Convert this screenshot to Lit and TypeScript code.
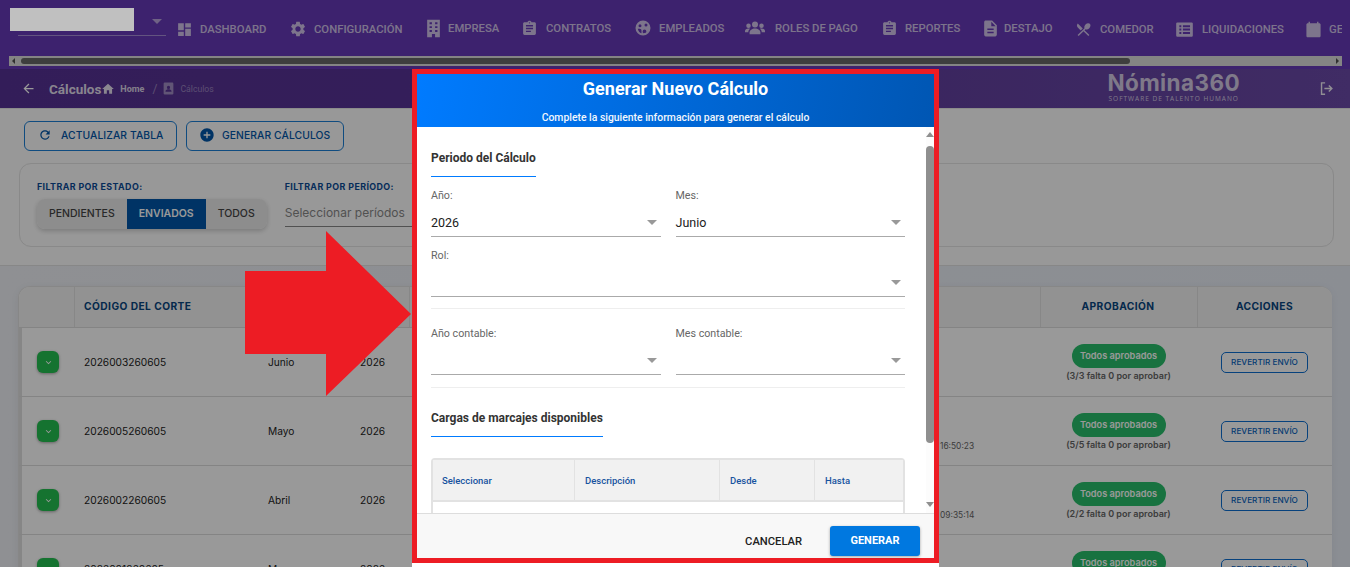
import { LitElement, html, css, svg } from "lit";
import { customElement } from "lit/decorators.js";

const P: Record<string, any> = {
  dashboard: svg`<path d="M3 13h8V3H3v10zm0 8h8v-6H3v6zm10 0h8V11h-8v10zm0-18v6h8V3h-8z"/>`,
  gear: svg`<path d="M19.14 12.94c.04-.3.06-.61.06-.94 0-.32-.02-.64-.07-.94l2.03-1.58c.18-.14.23-.41.12-.61l-1.92-3.32c-.12-.22-.37-.29-.59-.22l-2.39.96c-.5-.38-1.03-.7-1.62-.94l-.36-2.54c-.04-.24-.24-.41-.48-.41h-3.84c-.24 0-.43.17-.47.41l-.36 2.54c-.59.24-1.13.57-1.62.94l-2.39-.96c-.22-.08-.47 0-.59.22L2.74 8.87c-.12.21-.08.47.12.61l2.03 1.58c-.05.3-.09.63-.09.94s.02.64.07.94l-2.03 1.58c-.18.14-.23.41-.12.61l1.92 3.32c.12.22.37.29.59.22l2.39-.96c.5.38 1.03.7 1.62.94l.36 2.54c.05.24.24.41.48.41h3.84c.24 0 .44-.17.47-.41l.36-2.54c.59-.24 1.13-.56 1.62-.94l2.39.96c.22.08.47 0 .59-.22l1.92-3.32c.12-.22.07-.47-.12-.61l-2.01-1.58zM12 15.6c-1.98 0-3.6-1.62-3.6-3.6s1.62-3.6 3.6-3.6 3.6 1.62 3.6 3.6-1.62 3.6-3.6 3.6z"/>`,
  building: svg`<path fill-rule="evenodd" d="M4 1h16v22h-6v-4h-4v4H4zM7 4v2.500h3V4zm7 0v2.500h3V4zM7 9v2.500h3V9zm7 0v2.500h3V9zM7 14v2.500h3V14zm7 0v2.500h3V14z"/>`,
  clipboard: svg`<path d="M19 3h-4.18C14.4 1.84 13.3 1 12 1c-1.3 0-2.4.84-2.82 2H5c-1.1 0-2 .9-2 2v14c0 1.1.9 2 2 2h14c1.1 0 2-.9 2-2V5c0-1.1-.9-2-2-2zm-7 0c.55 0 1 .45 1 1s-.45 1-1 1-1-.45-1-1 .45-1 1-1zm2 14H7v-2h7v2zm3-4H7v-2h10v2zm0-4H7V7h10v2z"/>`,
  face: svg`<path fill-rule="evenodd" d="M12 2a10 10 0 100 20 10 10 0 000-20zM8 7a2 2 0 110 4 2 2 0 010-4zm8-1a2 2 0 110 4 2 2 0 010-4zM5 13h2.500c1.500 0 2.500 1 2.500 2.500V19c-2.500-.7-4.400-3-5-6zm9 1a2.500 2.500 0 012.500 2.500c0 .8-.3 1.400-.8 1.900l-3.200.6c-.8-.5-1-1.400-1-2.500A2.500 2.500 0 0114 14z"/>`,
  groups: svg`<g transform="translate(0 4)"><circle cx="12" cy="3.800" r="3.600"/><circle cx="4.200" cy="5.300" r="2.700"/><circle cx="19.800" cy="5.300" r="2.700"/><path d="M5.500 15.500v-2c0-3 3-5 6.500-5s6.500 2 6.500 5v2z"/><path d="M0 13v-1.500c0-1.800 1.800-3 4-3 .8 0 1.500.1 2.100.5-1.300 1-2.100 2.400-2.100 4z"/><path d="M24 13v-1.500c0-1.800-1.800-3-4-3-.8 0-1.500.1-2.100.5 1.300 1 2.100 2.400 2.100 4z"/></g>`,
  doc: svg`<path d="M14 2H6c-1.100 0-1.990.9-1.990 2L4 20c0 1.100.89 2 1.990 2H18c1.100 0 2-.9 2-2V8l-6-6zm2 16H8v-2h8v2zm0-4H8v-2h8v2zm-3-5V3.500L18.500 9H13z"/>`,
  food: svg`<path d="M8.100 13.340l2.830-2.830L3.910 3.500c-1.560 1.560-1.560 4.090 0 5.660l4.190 4.180zm6.780-1.810c1.530.71 3.680.21 5.270-1.380 1.910-1.910 2.280-4.650.81-6.120-1.460-1.460-4.200-1.100-6.120.81-1.590 1.590-2.090 3.740-1.380 5.270L3.700 19.870l1.410 1.410L12 14.410l6.880 6.880 1.410-1.410L13.410 13l1.470-1.470z"/>`,
  list: svg`<path fill-rule="evenodd" d="M3 3h18a1.500 1.500 0 011.500 1.500v15A1.500 1.500 0 0121 21H3a1.500 1.500 0 01-1.500-1.500v-15A1.500 1.500 0 013 3zm2.500 3.500v2.500H8V6.500zm4.500 0v2.500h9V6.500zm-4.500 4.300v2.500H8v-2.500zm4.500 0v2.500h9v-2.500zm-4.500 4.300v2.500H8v-2.500zm4.500 0v2.500h9v-2.500z"/>`,
  calendar: svg`<path d="M20 3h-1V1h-2v2H7V1H5v2H4c-1.100 0-2 .9-2 2v16c0 1.100.9 2 2 2h16c1.100 0 2-.9 2-2V5c0-1.100-.9-2-2-2z"/>`,
  refresh: svg`<path d="M17.650 6.350C16.200 4.900 14.210 4 12 4c-4.420 0-7.990 3.580-7.990 8s3.570 8 7.990 8c3.730 0 6.840-2.550 7.730-6h-2.080c-.82 2.330-3.040 4-5.650 4-3.310 0-6-2.690-6-6s2.690-6 6-6c1.660 0 3.140.69 4.220 1.780L13 11h7V4l-2.350 2.350z"/>`,
  add: svg`<path d="M12 2C6.480 2 2 6.480 2 12s4.480 10 10 10 10-4.480 10-10S17.520 2 12 2zm5 11h-4v4h-2v-4H7v-2h4V7h2v4h4v2z"/>`,
  home: svg`<path d="M10 20v-6h4v6h5v-8h3L12 3 2 12h3v8z"/>`,
  back: svg`<path d="M20 11H7.830l5.590-5.590L12 4l-8 8 8 8 1.410-1.410L7.830 13H20v-2z"/>`,
  badge: svg`<path fill-rule="evenodd" d="M5 1h14a2 2 0 012 2v18a2 2 0 01-2 2H5a2 2 0 01-2-2V3a2 2 0 012-2zm7 6a3 3 0 100 6 3 3 0 000-6zm-5.500 11h11v-1.500c0-2-3.700-3-5.500-3s-5.500 1-5.500 3z"/>`,
  logout: svg`<path d="M10 3H4v18h6v-2H6V5h4zm6 4l-1.400 1.400L17.200 11H9v2h8.200l-2.600 2.600L16 17l5-5z"/>`,
  chevron: svg`<path d="M7.410 8.590L12 13.170l4.590-4.580L18 10l-6 6-6-6z"/>`,
};

const icon = (name: string, size: number) =>
  html`<svg class="ic" viewBox="0 0 24 24" width=${size} height=${size} fill="currentColor">${P[name]}</svg>`;

const NAV = [
  { t: "DASHBOARD", i: "dashboard", s: 17, low: 1, w: 113, slot: 22 },
  { t: "CONFIGURACIÓN", i: "gear", s: 18, low: 1, w: 135, slot: 23 },
  { t: "EMPRESA", i: "building", s: 19, low: 0, w: 97, slot: 22 },
  { t: "CONTRATOS", i: "clipboard", s: 17, low: 0, w: 113, slot: 23 },
  { t: "EMPLEADOS", i: "face", s: 18, low: 0, w: 111, slot: 23 },
  { t: "ROLES DE PAGO", i: "groups", s: 20, low: 0, w: 136, slot: 28 },
  { t: "REPORTES", i: "clipboard", s: 17, low: 0, w: 100, slot: 22 },
  { t: "DESTAJO", i: "doc", s: 19, low: 0, w: 94, slot: 21 },
  { t: "COMEDOR", i: "food", s: 17, low: 1, w: 100, slot: 23 },
  { t: "LIQUIDACIONES", i: "list", s: 19, low: 1, w: 130, slot: 25 },
  { t: "GE", i: "calendar", s: 17, low: 1, w: 35, slot: 22 },
];

const ROWS = [
  { c: "2026003260605", m: "Junio", a: "2026", d: "", s: "(3/3 falta 0 por aprobar)" },
  { c: "2026005260605", m: "Mayo", a: "2026", d: "16:50:23", s: "(5/5 falta 0 por aprobar)" },
  { c: "2026002260605", m: "Abril", a: "2026", d: "09:35:14", s: "(2/2 falta 0 por aprobar)" },
  { c: "2026001260605", m: "Marzo", a: "2026", d: "", s: "(1/1 falta 0 por aprobar)" },
];

@customElement("app-root")
export class AppRoot extends LitElement {
  static styles = css`
    :host { display: block; position: relative; width: 1350px; height: 567px; overflow: hidden; background: #fff; font-family: Inter, "Liberation Sans", sans-serif; }
    * { box-sizing: border-box; }
    .ic { flex: none; display: block; }
    .nav { height: 69px; background: #673ab7; display: flex; flex-direction: column; }
    .menu { height: 56px; width: 1342px; display: flex; align-items: center; font: 500 11.300px Roboto, sans-serif; color: rgba(255,255,255,.7); white-space: nowrap; overflow: hidden; }
    .sel { flex: none; width: 148px; height: 36px; margin: 0 12px 20px 18px; border-bottom: 1px solid rgba(255,255,255,.42); position: relative; }
    .sel i { position: absolute; right: 4px; top: 19px; border: 5px solid transparent; border-top-color: rgba(255,255,255,.54); border-bottom: 0; }
    .item { flex: none; display: flex; align-items: center; height: 20px; }
    .item.low { margin-top: 2px; }
    .slot { flex: none; margin-left: -2px; }
    .sbar { margin-left: 9px; width: 1333px; height: 10px; background: #dcdcdc; display: flex; align-items: center; padding: 0 12px; position: relative; }
    .thumb { height: 6px; width: 1109px; background: #686868; border-radius: 3px; }
    .arrow-l, .arrow-r { position: absolute; top: 2px; border: 3px solid transparent; }
    .arrow-l { left: 3px; border-right-color: #505050; border-left: 0; }
    .arrow-r { right: 3px; border-left-color: #505050; border-right: 0; }
    .crumb { height: 39px; background: linear-gradient(90deg, #563194 0%, #583396 30%, #6b4aa8 100%); display: flex; align-items: center; color: #fff; padding-left: 21px; font-family: Roboto, sans-serif; }
    .crumb .title { font: 700 13.500px Roboto, sans-serif; margin-left: 13px; color: rgba(255,255,255,.85); }
    .crumb .home { margin-left: 0; color: rgba(255,255,255,.85); }
    .crumb .h { font: 700 9px Roboto, sans-serif; margin-left: 5px; color: rgba(255,255,255,.8); }
    .crumb .sl { margin: 0 5px 0 8px; font-size: 12px; color: rgba(255,255,255,.4); }
    .crumb .badge { color: rgba(255,255,255,.45); }
    .crumb .c2 { font: 400 8.700px Roboto, sans-serif; margin-left: 5px; color: rgba(255,255,255,.4); }
    .logo { margin-left: auto; margin-right: 78px; display: flex; flex-direction: column; align-items: center; color: rgba(255,255,255,.72); transform: translateY(-2px); }
    .logo b { font: 700 22.500px/24px Inter, sans-serif; letter-spacing: .4px; }
    .logo span { font: 400 6.500px/8px "Open Sans", sans-serif; letter-spacing: 1px; }
    .crumb .out { margin-right: 15px; color: rgba(255,255,255,.9); }
    .top { height: 158px; background: #fdfdfd; border-top: 1px solid #e8e8e8; border-bottom: 1px solid #e2e2e2; padding: 12px 16px 0 19px; }
    .btns { display: flex; gap: 9px; padding-left: 5px; height: 42px; }
    .bt { height: 30px; padding-bottom: 2px; border: 1px solid #1c7fd6; border-radius: 6px; display: flex; align-items: center; color: #0056a8; font: 500 10.300px Inter, sans-serif; letter-spacing: .1px; white-space: nowrap; }
    .bt.a { width: 153px; padding-left: 13px; gap: 9px; }
    .bt.b { width: 158px; padding-left: 12px; gap: 7px; }
    .filter { height: 84px; background: #fefefe; border: 1px solid #e4e4e4; border-radius: 12px; display: flex; padding: 17px 0 0 17px; gap: 18px; }
    .lab { font: 700 8.900px/12px Inter, sans-serif; letter-spacing: .4px; color: #0a4a96; white-space: nowrap; }
    .seg { display: flex; height: 30px; margin-top: 6px; border-radius: 8px; overflow: hidden; box-shadow: 0 2px 5px rgba(0,0,0,.2); font: 500 10.500px/30px Inter, sans-serif; color: #444; }
    .seg span { background: #ebebeb; padding: 0 12px; }
    .seg .on { background: #0056a8; color: #fff; font-weight: 600; }
    .pick { width: 200px; height: 34px; border-bottom: 1px solid #888; font: 400 12px/16px Inter, sans-serif; color: #888; padding-top: 12px; }
    .main { height: 301px; background: linear-gradient(90deg, #eef0f5, #e8edf6); padding: 20px 18px 0 18px; }
    .table { background: #fff; border-radius: 12px 12px 0 0; height: 300px; overflow: hidden; border: 1px solid #e2e2e2; border-bottom: 0; border-right: 0; box-shadow: 0 2px 8px rgba(0,0,0,.06); }
    .grid { display: grid; grid-template-columns: 56px 183px 92px 60px 521px 110px 157px 135px; }
    .thead { height: 41px; background: #f4f4f4; border-bottom: 1px solid #ddd; font: 700 10.200px/39px Inter, sans-serif; letter-spacing: .45px; color: #08457f; }
    .thead > div { border-right: 1px solid #e2e2e2; padding-left: 10px; white-space: nowrap; }
    .thead > div:nth-child(2) { padding-left: 9px; }
    .thead > .ctr { text-align: center; padding: 0 2px 0 0; }
    .thead > .nb { border-right: 0; }
    .tr { height: 69px; border-bottom: 1px solid #dcdcdc; align-items: center; font: 400 10.200px Inter, sans-serif; color: #222; box-shadow: inset 3px 0 0 #e0e0e0; }
    .tr > div { padding-left: 10px; white-space: nowrap; }
    .tr > div:nth-child(2) { padding-left: 9px; }
    .tr > .x { padding-left: 18px; }
    .ex { width: 22px; height: 22px; border-radius: 6px; background: #24c050; box-shadow: 0 1px 3px rgba(0,0,0,.35); color: #fff; display: flex; align-items: center; justify-content: center; }
    .tr > .d { color: #666; font-size: 8.400px; align-self: end; padding: 0 0 14px 9px; }
    .tr > .ap { display: flex; flex-direction: column; align-items: center; gap: 2px; padding: 1px 2px 0 0; }
    .pill { width: 94px; height: 24px; border-radius: 12px; background: #28bf6b; color: #fff; font: 600 9.200px/24px Inter, sans-serif; text-align: center; }
    .sub { font: 600 9px/12px Inter, sans-serif; color: #666; }
    .tr > .ac { display: flex; padding: 0 0 0 23px; }
    .rv { width: 87px; height: 21px; border: 1px solid #0d6ed0; border-radius: 5px; color: #0864c0; font: 500 8.200px/19px Inter, sans-serif; text-align: center; }
    .scrim { position: absolute; inset: 0; background: rgba(0,0,0,.4); }
    .redact { position: absolute; left: 10px; top: 8px; width: 124px; height: 23px; background: #c0c0c0; }
    .arrow { position: absolute; left: 245px; top: 231px; }
    .sheet { position: absolute; left: 412px; top: 69px; width: 527px; height: 498px; background: #fff; font-family: Roboto, sans-serif; }
    .dlg { height: 494px; border: 5px solid #ed1c24; display: flex; flex-direction: column; background: #fff; }
    .hd { height: 53px; flex: none; background: linear-gradient(100deg, #007bff, #0056b3); color: #fff; text-align: center; }
    .hd h2 { margin: 0; font: 700 18px/30px Roboto, sans-serif; }
    .hd p { margin: 0; font: 500 10.400px/16px Roboto, sans-serif; padding-top: 6px; opacity: .95; }
    .body { flex: 1; min-height: 0; overflow: hidden; display: flex; }
    .cont { width: 509px; flex: none; padding: 21px 21px 0 14px; }
    .sec { display: block; width: fit-content; font: 700 12px/20px Roboto, sans-serif; color: #333; border-bottom: 1px solid #007bff; padding-bottom: 8px; }
    .sec.second { margin-top: 20px; }
    .row { display: flex; gap: 15px; }
    .row.lower { margin-top: 6px; }
    .fld { flex: 1; min-width: 0; }
    .fld label { display: block; font: 400 10.700px/14px Roboto, sans-serif; color: #666; padding-top: 12px; }
    .in { height: 33px; border-bottom: 1px solid #aaa; position: relative; font: 400 12.500px/26px Roboto, sans-serif; color: #212121; margin-top: 1px; padding-top: 6px; }
    .in i { position: absolute; right: 4px; top: 16px; border: 5px solid transparent; border-top-color: #999; border-bottom: 0; }
    .hr { height: 1px; background: #eee; margin-top: 11px; }
    .hr.b { margin-top: 12px; }
    .sb { flex: 1; position: relative; background: #fcfcfc; }
    .sb .th { position: absolute; right: 0; top: 19px; width: 8px; height: 297px; background: #8f8f8f; border-radius: 4px; }
    .sb i { position: absolute; right: 0; border: 4px solid transparent; }
    .sb .u { top: 5px; border-bottom: 5px solid #8f8f8f; border-top: 0; }
    .sb .dn { bottom: 6px; border-top: 5px solid #8f8f8f; border-bottom: 0; }
    .mt { margin-top: 21px; border: 2px solid #e2e2e2; border-bottom: 0; border-radius: 4px 4px 0 0; height: 80px; }
    .mh { display: grid; grid-template-columns: 142px 145px 95px 1fr; height: 42px; background: #f1f1f1; border-bottom: 2px solid #e2e2e2; font: 500 9.500px/42px Roboto, sans-serif; color: #17539f; }
    .mh div { padding-left: 10px; border-right: 1px solid #e2e2e2; }
    .mh div:first-child { padding-left: 9px; }
    .mh div:last-child { border: 0; }
    .ft { flex: none; height: 45px; background: #f8f8f8; border-top: 1px solid #ddd; display: flex; justify-content: flex-end; align-items: center; padding: 10px 14px 0 0; gap: 28px; font: 500 11.200px Roboto, sans-serif; }
    .ft .cn { color: #212121; }
    .ft .gn { width: 90px; height: 30px; border-radius: 3px; background: #0078e0; color: #fff; font-weight: 700; font-size: 11px; text-align: center; line-height: 30px; box-shadow: 0 1px 3px rgba(0,0,0,.35); }
  `;

  private sel(v = "") { return html`<div class="in">${v}<i></i></div>`; }

  render() {
    return html`
      <div class="nav">
        <div class="menu">
          <div class="sel"><i></i></div>
          ${NAV.map((n) => html`<div class="item ${n.low ? "low" : ""}" style="width:${n.w}px"><div class="slot" style="width:${n.slot + 2}px">${icon(n.i, n.s)}</div><span>${n.t}</span></div>`)}
        </div>
        <div class="sbar"><i class="arrow-l"></i><div class="thumb"></div><i class="arrow-r"></i></div>
      </div>
      <div class="crumb">
        ${icon("back", 15)}
        <span class="title">Cálculos</span>
        <span class="home">${icon("home", 14)}</span><span class="h">Home</span><span class="sl">/</span>
        <span class="badge">${icon("badge", 13)}</span><span class="c2">Cálculos</span>
        <div class="logo"><b>Nómina360</b><span>SOFTWARE DE TALENTO HUMANO</span></div>
        <span class="out">${icon("logout", 17)}</span>
      </div>
      <div class="top">
        <div class="btns">
          <div class="bt a">${icon("refresh", 14)}ACTUALIZAR TABLA</div>
          <div class="bt b">${icon("add", 16)}GENERAR CÁLCULOS</div>
        </div>
        <div class="filter">
          <div>
            <div class="lab">FILTRAR POR ESTADO:</div>
            <div class="seg"><span>PENDIENTES</span><span class="on">ENVIADOS</span><span>TODOS</span></div>
          </div>
          <div>
            <div class="lab">FILTRAR POR PERÍODO:</div>
            <div class="pick">Seleccionar períodos</div>
          </div>
        </div>
      </div>
      <div class="main">
        <div class="table">
          <div class="grid thead">
            <div></div><div>CÓDIGO DEL CORTE</div><div class="nb">MES</div><div>AÑO</div><div class="nb"></div><div></div>
            <div class="ctr">APROBACIÓN</div><div class="ctr nb">ACCIONES</div>
          </div>
          ${ROWS.map((r) => html`
            <div class="grid tr">
              <div class="x"><div class="ex">${icon("chevron", 11)}</div></div>
              <div>${r.c}</div><div>${r.m}</div><div>${r.a}</div><div></div>
              <div class="d">${r.d}</div>
              <div class="ap"><div class="pill">Todos aprobados</div><div class="sub">${r.s}</div></div>
              <div class="ac"><div class="rv">REVERTIR ENVÍO</div></div>
            </div>`)}
        </div>
      </div>
      <div class="scrim"></div>
      <div class="redact"></div>
      <svg class="arrow" width="167" height="165" viewBox="0 0 167 165"><path fill="#ed1c24" d="M0 40H81V0L166 83 81 165V123H0z"/></svg>
      <div class="sheet">
        <div class="dlg">
          <div class="hd"><h2>Generar Nuevo Cálculo</h2><p>Complete la siguiente información para generar el cálculo</p></div>
          <div class="body">
            <div class="cont">
              <div class="sec">Periodo del Cálculo</div>
              <div class="row">
                <div class="fld"><label>Año:</label>${this.sel("2026")}</div>
                <div class="fld"><label>Mes:</label>${this.sel("Junio")}</div>
              </div>
              <div class="fld"><label>Rol:</label>${this.sel()}</div>
              <div class="hr"></div>
              <div class="row lower">
                <div class="fld"><label>Año contable:</label>${this.sel()}</div>
                <div class="fld"><label>Mes contable:</label>${this.sel()}</div>
              </div>
              <div class="hr b"></div>
              <div class="sec second">Cargas de marcajes disponibles</div>
              <div class="mt"><div class="mh"><div>Seleccionar</div><div>Descripción</div><div>Desde</div><div>Hasta</div></div></div>
            </div>
            <div class="sb"><i class="u"></i><div class="th"></div><i class="dn"></i></div>
          </div>
          <div class="ft"><span class="cn">CANCELAR</span><span class="gn">GENERAR</span></div>
        </div>
      </div>
    `;
  }
}
